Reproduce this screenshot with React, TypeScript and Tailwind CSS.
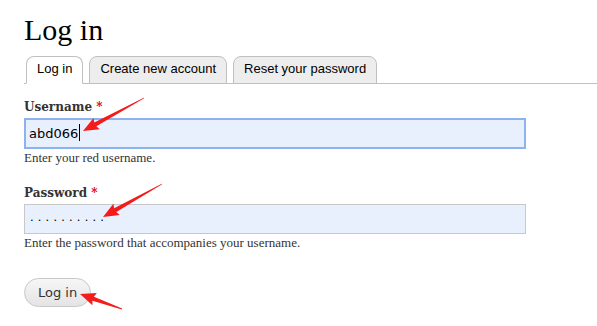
import React from 'react';

const tabs = ['Log in', 'Create new account', 'Reset your password'];

function Arrow({ x1, y1, x2, y2 }: { x1: number; y1: number; x2: number; y2: number }) {
  const dx = x2 - x1;
  const dy = y2 - y1;
  const len = Math.sqrt(dx * dx + dy * dy);
  const ux = dx / len;
  const uy = dy / len;
  const nx = -uy;
  const ny = ux;
  const headLen = 14;
  const headW = 6.5;
  const bx = x2 - ux * headLen;
  const by = y2 - uy * headLen;
  const pts = [
    [x1 + nx * 0.4, y1 + ny * 0.4],
    [bx + nx * 2.2, by + ny * 2.2],
    [bx + nx * headW - ux * 1.5, by + ny * headW - uy * 1.5],
    [x2, y2],
    [bx - nx * headW - ux * 1.5, by - ny * headW - uy * 1.5],
    [bx - nx * 2.2, by - ny * 2.2],
    [x1 - nx * 0.4, y1 - ny * 0.4],
  ]
    .map((p) => p.join(','))
    .join(' ');
  return <polygon points={pts} fill="#f51b1b" />;
}

export default function App() {
  return (
    <div className="relative h-[326px] w-[597px] overflow-hidden bg-white">
      <div className="pl-6 pt-[10px]">
        <h1 className="text-[30px] leading-[40px] text-black [font-family:'Liberation_Serif',serif]">Log in</h1>
        <div className="mt-[6px] flex gap-[6px] border-b border-[#c0c0c0] pl-[2px] [font-family:'Liberation_Sans',Arial,sans-serif]">
          {tabs.map((t, i) => (
            <div
              key={t}
              className={
                'relative -mb-px h-[28px] rounded-t-[8px] border border-[#c0c0c0] px-[10px] pt-[2px] text-[13px] text-black ' +
                (i === 0 ? 'border-b-white bg-white' : 'bg-[#ededed]')
              }
            >
              {t}
            </div>
          ))}
        </div>

        <div className="mr-[71px] [font-family:'DejaVu_Serif',Georgia,serif]">
          <label className="mt-[15px] block text-[12px] font-bold leading-[16px] text-[#333]">
            Username <span className="text-[#e0001b]">*</span>
          </label>
          <div className="mt-[3px] h-[31px] border-2 border-[#8cb3ef] bg-[#e8f0fe] pl-[3px] text-[13px] leading-[27px] text-black [font-family:'DejaVu_Sans',Verdana,sans-serif]">
            abd066<span className="ml-px inline-block h-[17px] w-px translate-y-[3px] bg-black" />
          </div>
          <p className="mt-[1px] text-[13px] leading-[15px] text-[#333] [font-family:'Liberation_Serif',Georgia,serif]">Enter your red username.</p>

          <label className="mt-[20px] block text-[12px] font-bold leading-[16px] text-[#333]">
            Password <span className="text-[#e0001b]">*</span>
          </label>
          <div className="mt-[3px] h-[30px] border border-[#c8c8c8] bg-[#e8f0fe] pl-[5px] text-[13px] leading-[24px] tracking-[4.2px] text-black [font-family:'Liberation_Sans',Arial,sans-serif]">
            ..........
          </div>
          <p className="mt-[1px] text-[13px] leading-[15px] text-[#333] [font-family:'Liberation_Serif',Georgia,serif]">Enter the password that accompanies your username.</p>
        </div>

        <button className="mt-[28px] h-[29px] rounded-full border border-[#c8c8c8] bg-gradient-to-b from-[#f6f6f6] to-[#e4e4e4] px-[13px] text-[13px] text-[#333] [font-family:'DejaVu_Sans',sans-serif]">
          Log in
        </button>
      </div>

      <svg className="pointer-events-none absolute left-0 top-0" width="597" height="326">
        <Arrow x1={144} y1={98} x2={83} y2={131} />
        <Arrow x1={162} y1={184} x2={103} y2={217} />
        <Arrow x1={122} y1={309} x2={80} y2={294} />
      </svg>
    </div>
  );
}
